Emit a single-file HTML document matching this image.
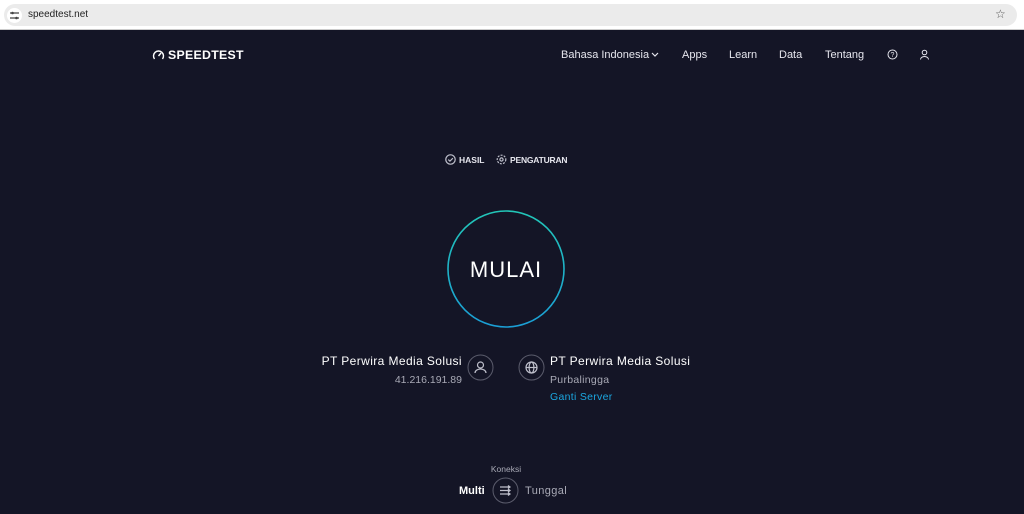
<!DOCTYPE html>
<html><head><meta charset="utf-8"><style>
*{margin:0;padding:0;box-sizing:border-box}
body{width:1024px;height:514px;overflow:hidden;background:#141526;font-family:"Liberation Sans",sans-serif;color:#fff;position:relative}
.abs{position:absolute}
.top{left:0;top:0;width:1024px;height:30px;background:#fff;border-bottom:1px solid #ccc}
.url{left:4px;top:4px;width:1013px;height:22px;border-radius:11px;background:#ebebeb}
.nav{font-size:11px;color:#e6e6ee;top:49px}
.ic{fill:none;stroke:#bfc0cc;stroke-width:1.2}
</style></head><body>
<div class="abs top"></div>
<div class="abs url"></div>
<div class="abs" style="left:7px;top:8px;width:15px;height:15px;border-radius:50%;background:#fff"></div>
<svg class="abs" style="left:9px;top:10px" width="11" height="11" viewBox="0 0 11 11"><path d="M1 3h9M1 8h9" stroke="#444" stroke-width="1.2"/><circle cx="3.5" cy="3" r="1.3" fill="#444"/><circle cx="7.5" cy="8" r="1.3" fill="#444"/></svg>
<div class="abs" style="left:28px;top:9px;font-size:10px;color:#222">speedtest.net</div>
<div class="abs" style="left:995px;top:7px;font-size:12px;color:#555">☆</div>

<svg class="abs" style="left:152px;top:48px" width="13" height="13" viewBox="0 0 13 13"><path d="M2.5 11A5 5 0 1 1 10.5 11" fill="none" stroke="#fff" stroke-width="1.4"/><path d="M6.5 8L9 5" stroke="#fff" stroke-width="1.4"/></svg>
<div class="abs" style="left:168px;top:48px;font-size:12.3px;font-weight:bold;letter-spacing:.3px">SPEEDTEST</div>

<div class="abs nav" style="left:561px">Bahasa Indonesia</div>
<svg class="abs" style="left:651px;top:52px" width="8" height="6"><path d="M1 1l3 3 3-3" fill="none" stroke="#e6e6ee" stroke-width="1.2"/></svg>
<div class="abs nav" style="left:682px">Apps</div>
<div class="abs nav" style="left:729px">Learn</div>
<div class="abs nav" style="left:779px">Data</div>
<div class="abs nav" style="left:825px">Tentang</div>
<svg class="abs" style="left:887px;top:49px" width="11" height="11" viewBox="0 0 11 11"><circle cx="5.5" cy="5.5" r="4.5" fill="none" stroke="#e6e6ee"/><text x="5.5" y="8" font-size="7" text-anchor="middle" fill="#e6e6ee" font-family="Liberation Sans">?</text></svg>
<svg class="abs" style="left:919px;top:49px" width="11" height="11" viewBox="0 0 11 11"><circle cx="5.5" cy="3.5" r="2.3" fill="none" stroke="#e6e6ee"/><path d="M1.5 10.5a4 3 0 0 1 8 0" fill="none" stroke="#e6e6ee"/></svg>

<svg class="abs" style="left:445px;top:154px" width="11" height="11" viewBox="0 0 11 11"><circle cx="5.5" cy="5.5" r="4.7" class="ic"/><path d="M3.3 5.6l1.6 1.6 3-3" class="ic"/></svg>
<div class="abs" style="left:459px;top:155px;font-size:8.5px;font-weight:bold;color:#e6e6ee">HASIL</div>
<svg class="abs" style="left:496px;top:154px" width="11" height="11" viewBox="0 0 11 11"><circle cx="5.5" cy="5.5" r="4.3" class="ic" stroke-dasharray="2 1.2"/><circle cx="5.5" cy="5.5" r="1.6" class="ic"/></svg>
<div class="abs" style="left:510px;top:155px;font-size:8.5px;font-weight:bold;color:#e6e6ee;letter-spacing:-.2px">PENGATURAN</div>

<svg class="abs" style="left:445px;top:208px" width="122" height="122" viewBox="0 0 122 122"><defs><linearGradient id="g" x1="0" y1="0" x2="0" y2="1"><stop offset="0" stop-color="#22c6b8"/><stop offset="1" stop-color="#1b9fd6"/></linearGradient></defs><circle cx="61" cy="61" r="58" fill="none" stroke="url(#g)" stroke-width="1.6"/></svg>
<div class="abs" style="left:445px;top:257px;width:122px;text-align:center;font-size:22px;letter-spacing:1px">MULAI</div>

<div class="abs" style="left:280px;top:354px;width:182px;text-align:right;font-size:12px;letter-spacing:.4px">PT Perwira Media Solusi</div>
<div class="abs" style="left:290px;top:374px;width:172px;text-align:right;font-size:10.5px;color:#a9aab6">41.216.191.89</div>
<svg class="abs" style="left:467px;top:354px" width="27" height="27" viewBox="0 0 27 27"><circle cx="13.5" cy="13.5" r="12.5" fill="none" stroke="#5b5c6c"/><circle cx="13.5" cy="11" r="3" class="ic"/><path d="M8 19a5.5 4 0 0 1 11 0" class="ic"/></svg>
<svg class="abs" style="left:518px;top:354px" width="27" height="27" viewBox="0 0 27 27"><circle cx="13.5" cy="13.5" r="12.5" fill="none" stroke="#5b5c6c"/><circle cx="13.5" cy="13.5" r="5.5" class="ic"/><ellipse cx="13.5" cy="13.5" rx="2.4" ry="5.5" class="ic"/><path d="M8 13.5h11" class="ic"/></svg>
<div class="abs" style="left:550px;top:354px;font-size:12px;letter-spacing:.4px">PT Perwira Media Solusi</div>
<div class="abs" style="left:550px;top:374px;font-size:10.5px;color:#a9aab6;letter-spacing:.3px">Purbalingga</div>
<div class="abs" style="left:550px;top:391px;font-size:10.5px;color:#1ba7e0;letter-spacing:.3px">Ganti Server</div>

<div class="abs" style="left:476px;top:464px;width:60px;text-align:center;font-size:8.5px;color:#a9aab6">Koneksi</div>
<div class="abs" style="left:459px;top:485px;font-size:11px;font-weight:bold">Multi</div>
<svg class="abs" style="left:492px;top:477px" width="27" height="27" viewBox="0 0 27 27"><circle cx="13.5" cy="13.5" r="12.5" fill="none" stroke="#5b5c6c"/><path d="M8 10h10M8 13.5h10M8 17h10M16 8.5l2 1.5-2 1.5M16 12l2 1.5-2 1.5M16 15.5l2 1.5-2 1.5" class="ic" stroke-width="1"/></svg>
<div class="abs" style="left:525px;top:485px;font-size:11px;color:#a9aab6;letter-spacing:.4px">Tunggal</div>
</body></html>
